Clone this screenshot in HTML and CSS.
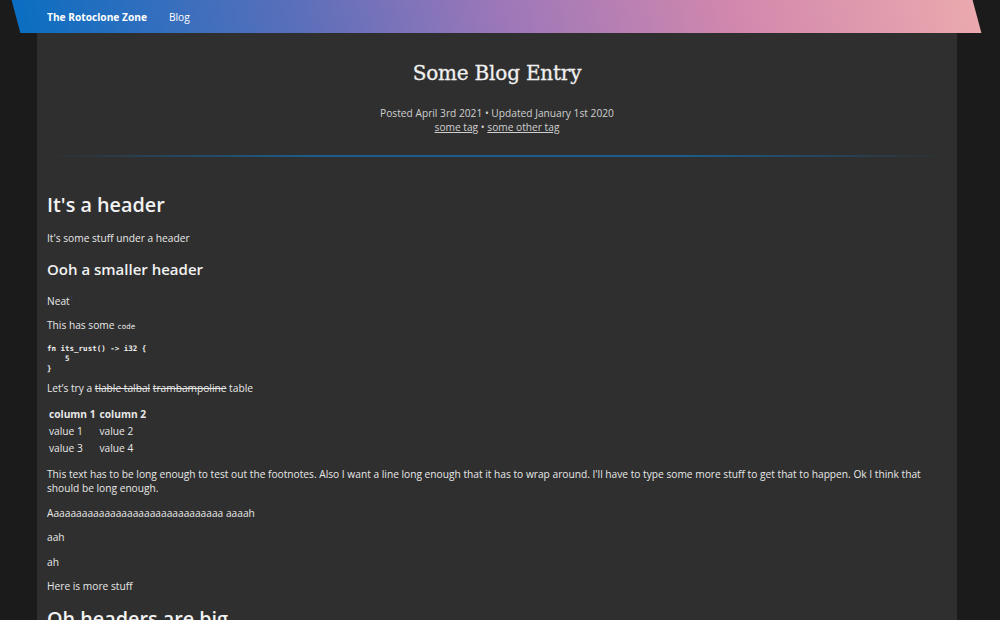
FILE: index.html
```html
<!DOCTYPE html>
<html lang="en">
<head>
<meta charset="utf-8">
<title>Some Blog Entry</title>
<link rel="stylesheet" href="styles.css">
</head>
<body>
<nav class="topbar">
  <a class="brand" href="#">The Rotoclone Zone</a>
  <a class="navlink" href="#">Blog</a>
</nav>
<main class="column">
  <header class="entry-head">
    <h1 class="entry-title">Some Blog Entry</h1>
    <div class="meta">Posted April 3rd 2021 &bull; Updated January 1st 2020</div>
    <div class="meta"><a href="#">some tag</a> &bull; <a href="#">some other tag</a></div>
  </header>
  <hr class="divider">
  <article class="content">
    <h1>It's a header</h1>
    <p>It's some stuff under a header</p>
    <h2>Ooh a smaller header</h2>
    <p>Neat<sup class="fnref"><a href="#">1</a></sup></p>
    <p>This has some <code>code</code></p>
<pre>fn its_rust() -&gt; i32 {
    5
}</pre>
    <p class="after-code">Let’s try a <del>tlable talbal</del> <del>trambampoline</del> table</p>
    <table>
      <thead><tr><th>column 1</th><th>column 2</th></tr></thead>
      <tbody>
        <tr><td>value 1</td><td>value 2</td></tr>
        <tr><td>value 3</td><td>value 4</td></tr>
      </tbody>
    </table>
    <p class="tail">This text has to be long enough to test out the footnotes. Also I want a line long enough that it has to wrap around. I'll have to type some more stuff to get that to happen. Ok I think that should be long enough.</p>
    <p class="tail">Aaaaaaaaaaaaaaaaaaaaaaaaaaaaaaa aaaah</p>
    <p class="tail">aah</p>
    <p class="tail">ah</p>
    <p class="tail">Here is more stuff</p>
    <h1 class="last-h">Oh headers are big</h1>
  </article>
</main>
</body>
</html>
```

FILE: styles.css
```css
html, body {
  margin: 0;
  padding: 0;
}
body {
  background: #1b1b1b;
  font-family: "Open Sans", "Noto Sans", sans-serif;
  color: #e8e8e8;
  font-size: 10.2px;
  line-height: 14px;
  overflow: hidden;
  height: 620px;
}
.topbar {
  position: relative;
  z-index: 1;
  margin-left: 16px;
  width: 961px;
  height: 33px;
  display: flex;
  align-items: center;
  gap: 22px;
  padding-left: 31px;
  box-sizing: border-box;
}
.topbar::before {
  content: "";
  position: absolute;
  inset: 0;
  z-index: -1;
  background: linear-gradient(to right, #0a6ec1 0%, #5d6fba 30%, #9b77b9 50%, #d288ad 75%, #eaa9ae 100%);
  transform: skewX(15deg);
}
.topbar a {
  color: #ffffff;
  text-decoration: none;
  font-size: 10.2px;
}
.brand {
  font-weight: 700;
}
.navlink {
  color: #e8eef8;
}
.column {
  margin-left: 37px;
  width: 920px;
  min-height: 587px;
  background: #2f2f2f;
  padding: 26px 10px 40px;
  box-sizing: border-box;
}
.entry-head {
  text-align: center;
}
.entry-title {
  margin: 0;
  font-family: "DejaVu Serif", "Liberation Serif", serif;
  font-weight: 400;
  font-size: 20px;
  line-height: 28px;
  color: #f0f0f0;
  letter-spacing: -0.2px;
  -webkit-text-stroke: 0.3px #f0f0f0;
}
.meta {
  color: #cfcfcf;
  line-height: 14px;
}
.entry-head .meta:first-of-type {
  margin-top: 19px;
}
.meta a {
  color: #cfcfcf;
  text-decoration: underline;
}
.divider {
  border: 0;
  height: 2px;
  margin: 21px -2px 0;
  background: linear-gradient(to right, rgba(26,90,140,0) 0%, #1b5e8e 30%, #1b5e8e 70%, rgba(26,90,140,0) 100%);
}
.content h1 {
  font-size: 19.8px;
  line-height: 28px;
  font-weight: 600;
  margin: 34px 0 12px;
  color: #f2f2f2;
}
.content h2 {
  font-size: 15px;
  line-height: 20px;
  font-weight: 600;
  margin: 14px 0 15px;
  color: #f2f2f2;
}
.content p {
  margin: 10px 0;
}
.content h1 + p, .content h2 + p {
  margin-top: 0;
}
.content p.after-code {
  margin-top: 7px;
}
.content p.tail {
  margin: 10.5px 0;
}
.content h1.last-h {
  margin-top: 12px;
}
.fnref {
  font-size: 7px;
  line-height: 0;
}
.fnref a {
  color: #3c3a6e;
  text-decoration: none;
}
code, pre {
  font-family: "DejaVu Sans Mono", "Liberation Mono", monospace;
}
code {
  font-size: 7.5px;
}
pre {
  font-size: 7.5px;
  line-height: 10px;
  margin: 9px 0 7px;
  color: #f0f0f0;
  font-weight: 700;
}
del {
  text-decoration: line-through;
}
table {
  border-collapse: collapse;
  margin: 10px 0 11px;
}
th, td {
  padding: 1.5px 2px;
  text-align: left;
  line-height: 14px;
}
th {
  font-weight: 700;
}
```
